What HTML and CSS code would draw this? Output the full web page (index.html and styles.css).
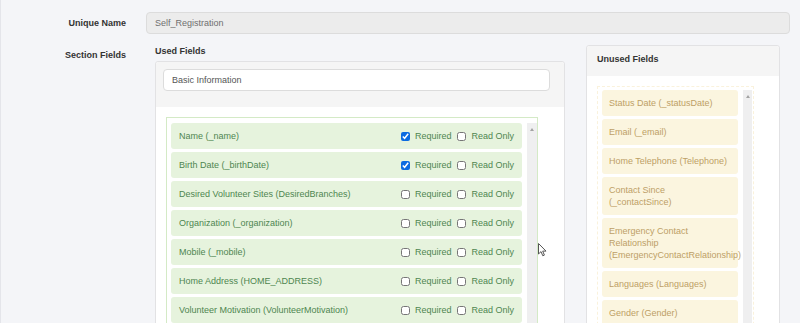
FILE: index.html
```html
<!DOCTYPE html>
<html lang="en">

<head>
    <meta charset="UTF-8">
    <meta name="viewport" content="width=device-width, initial-scale=1.0">
    <title>Section Fields</title>
    <link rel="stylesheet" href="styles.css">
</head>

<body>
    <div class="form">
        <label class="form-label">Unique Name</label>
        <div class="form-field">
            <input class="input input-readonly" type="text" value="Self_Registration" readonly>
        </div>

        <label class="form-label form-label-top">Section Fields</label>
        <div class="form-field fields">
            <div class="fields-used">
                <h4 class="fields-title">Used Fields</h4>
                <div class="panel">
                    <div class="panel-head">
                        <input class="input" type="text" value="Basic Information">
                    </div>
                    <div class="panel-body">
                        <div class="list list-used">
                            <ul class="list-items">
                                <li class="item item-used">
                                    <span class="item-name">Name (_name)</span>
                                    <span class="item-opts">
                                        <input type="checkbox" checked><span>Required</span>
                                        <input type="checkbox"><span>Read Only</span>
                                    </span>
                                </li>
                                <li class="item item-used">
                                    <span class="item-name">Birth Date (_birthDate)</span>
                                    <span class="item-opts">
                                        <input type="checkbox" checked><span>Required</span>
                                        <input type="checkbox"><span>Read Only</span>
                                    </span>
                                </li>
                                <li class="item item-used">
                                    <span class="item-name">Desired Volunteer Sites (DesiredBranches)</span>
                                    <span class="item-opts">
                                        <input type="checkbox"><span>Required</span>
                                        <input type="checkbox"><span>Read Only</span>
                                    </span>
                                </li>
                                <li class="item item-used">
                                    <span class="item-name">Organization (_organization)</span>
                                    <span class="item-opts">
                                        <input type="checkbox"><span>Required</span>
                                        <input type="checkbox"><span>Read Only</span>
                                    </span>
                                </li>
                                <li class="item item-used">
                                    <span class="item-name">Mobile (_mobile)</span>
                                    <span class="item-opts">
                                        <input type="checkbox"><span>Required</span>
                                        <input type="checkbox"><span>Read Only</span>
                                    </span>
                                </li>
                                <li class="item item-used">
                                    <span class="item-name">Home Address (HOME_ADDRESS)</span>
                                    <span class="item-opts">
                                        <input type="checkbox"><span>Required</span>
                                        <input type="checkbox"><span>Read Only</span>
                                    </span>
                                </li>
                                <li class="item item-used">
                                    <span class="item-name">Volunteer Motivation (VolunteerMotivation)</span>
                                    <span class="item-opts">
                                        <input type="checkbox"><span>Required</span>
                                        <input type="checkbox"><span>Read Only</span>
                                    </span>
                                </li>
                            </ul>
                            <div class="scrollbar"></div>
                        </div>
                    </div>
                </div>
            </div>

            <div class="fields-unused">
                <div class="panel">
                    <div class="panel-head panel-head-title">Unused Fields</div>
                    <div class="panel-body">
                        <div class="list list-unused">
                            <ul class="list-items">
                                <li class="item item-unused">Status Date (_statusDate)</li>
                                <li class="item item-unused">Email (_email)</li>
                                <li class="item item-unused">Home Telephone (Telephone)</li>
                                <li class="item item-unused">Contact Since (_contactSince)</li>
                                <li class="item item-unused">Emergency Contact Relationship (EmergencyContactRelationship)</li>
                                <li class="item item-unused">Languages (Languages)</li>
                                <li class="item item-unused">Gender (Gender)</li>
                            </ul>
                            <div class="scrollbar"></div>
                        </div>
                    </div>
                </div>
            </div>
        </div>
    </div>

    <!-- mouse pointer caught in the capture -->
    <svg class="cursor" width="10" height="14" viewBox="0 0 10 14">
        <path d="M0.5 0.5 L0.5 11 L3 8.6 L4.8 12.8 L6.4 12.1 L4.7 8.1 L8 8.1 Z" fill="#fff" stroke="#555" stroke-width="1" stroke-linejoin="round" />
    </svg>
</body>

</html>
```

FILE: styles.css
```css
html,
body {
    height: 100%;
    overflow: hidden;
}

body {
    margin: 0;
    border-left: 1px solid #e4e5ea;
    background-color: #f4f5f8;
    font-family: "Liberation Sans", Arial, sans-serif;
    font-size: 9px;
    line-height: 12px;
    color: #333;
}

.form {
    display: grid;
    grid-template-columns: 125px 1fr;
    column-gap: 20px;
    row-gap: 11px;
    padding: 12px 10px 0 0;
}

.form-label {
    display: flex;
    align-items: center;
    justify-content: flex-end;
    font-weight: bold;
    color: #333;
}

.form-label-top {
    align-items: flex-start;
    padding-top: 4px;
}

.input {
    box-sizing: border-box;
    display: block;
    width: 100%;
    height: 22px;
    margin: 0;
    padding: 0 8px;
    border: 1px solid #dcdcdc;
    border-radius: 4px;
    background-color: #fff;
    font: inherit;
    color: #555;
    outline: none;
}

.input-readonly {
    background-color: #ececec;
    color: #6f6f6f;
}

.fields {
    display: flex;
    align-items: flex-start;
    gap: 21px;
    padding-left: 9px;
}

.fields-used {
    width: 410px;
}

.fields-unused {
    width: 194px;
}

.fields-title {
    margin: 0 0 4px;
    font-size: 9px;
    line-height: 12px;
    font-weight: bold;
    color: #333;
}

.panel {
    border: 1px solid #e2e2e4;
    border-radius: 3px;
    background-color: #fff;
}

.panel-head {
    padding: 7px 14px 16px 7px;
    border-radius: 3px 3px 0 0;
    background-color: #f5f5f5;
}

.panel-head-title {
    padding: 7px 10px 11px;
    font-weight: bold;
    color: #333;
}

.panel-body {
    padding: 10px;
}

.list {
    display: flex;
    align-items: stretch;
    gap: 5px;
    overflow: hidden;
    padding: 5px 0 0 4px;
}

.list-used {
    width: 366px;
    border: 1px solid #d4eac6;
    border-bottom: none;
    height: 300px;
}

.list-unused {
    width: 151px;
    padding-top: 3px;
    border: 1px dashed #faf2dc;
    border-bottom: none;
    height: 300px;
}

.list-items {
    flex: none;
    margin: 0;
    padding: 0;
    list-style: none;
}

.list-used .list-items {
    width: 351px;
}

.list-unused .list-items {
    width: 136px;
}

.item {
    box-sizing: border-box;
    margin-bottom: 3px;
    padding: 7px 8px 7px 7px;
    border-radius: 3px;
}

.item-used {
    display: flex;
    align-items: center;
    justify-content: space-between;
    padding-left: 8px;
    background-color: #e6f3dd;
    color: #4e8650;
}

.item-unused {
    background-color: #fbf5df;
    color: #bd9f66;
}

.item-opts {
    display: flex;
    align-items: center;
}

.item-opts input {
    width: 9px;
    height: 9px;
    margin: 0 5px 0 0;
    accent-color: #0b6be0;
}

.item-opts span+input {
    margin-left: 6px;
}

.scrollbar {
    position: relative;
    flex: none;
    width: 10px;
    background-color: #efeff0;
}

.list-unused .scrollbar {
    width: 9px;
}

.scrollbar::before {
    content: '';
    position: absolute;
    top: 5px;
    left: 50%;
    transform: translate(-50%, 0);
    border-right: 2.5px solid transparent;
    border-left: 2.5px solid transparent;
    border-bottom: 3px solid #a3a3a3;
}

.cursor {
    position: absolute;
    top: 243px;
    left: 538px;
}
```
